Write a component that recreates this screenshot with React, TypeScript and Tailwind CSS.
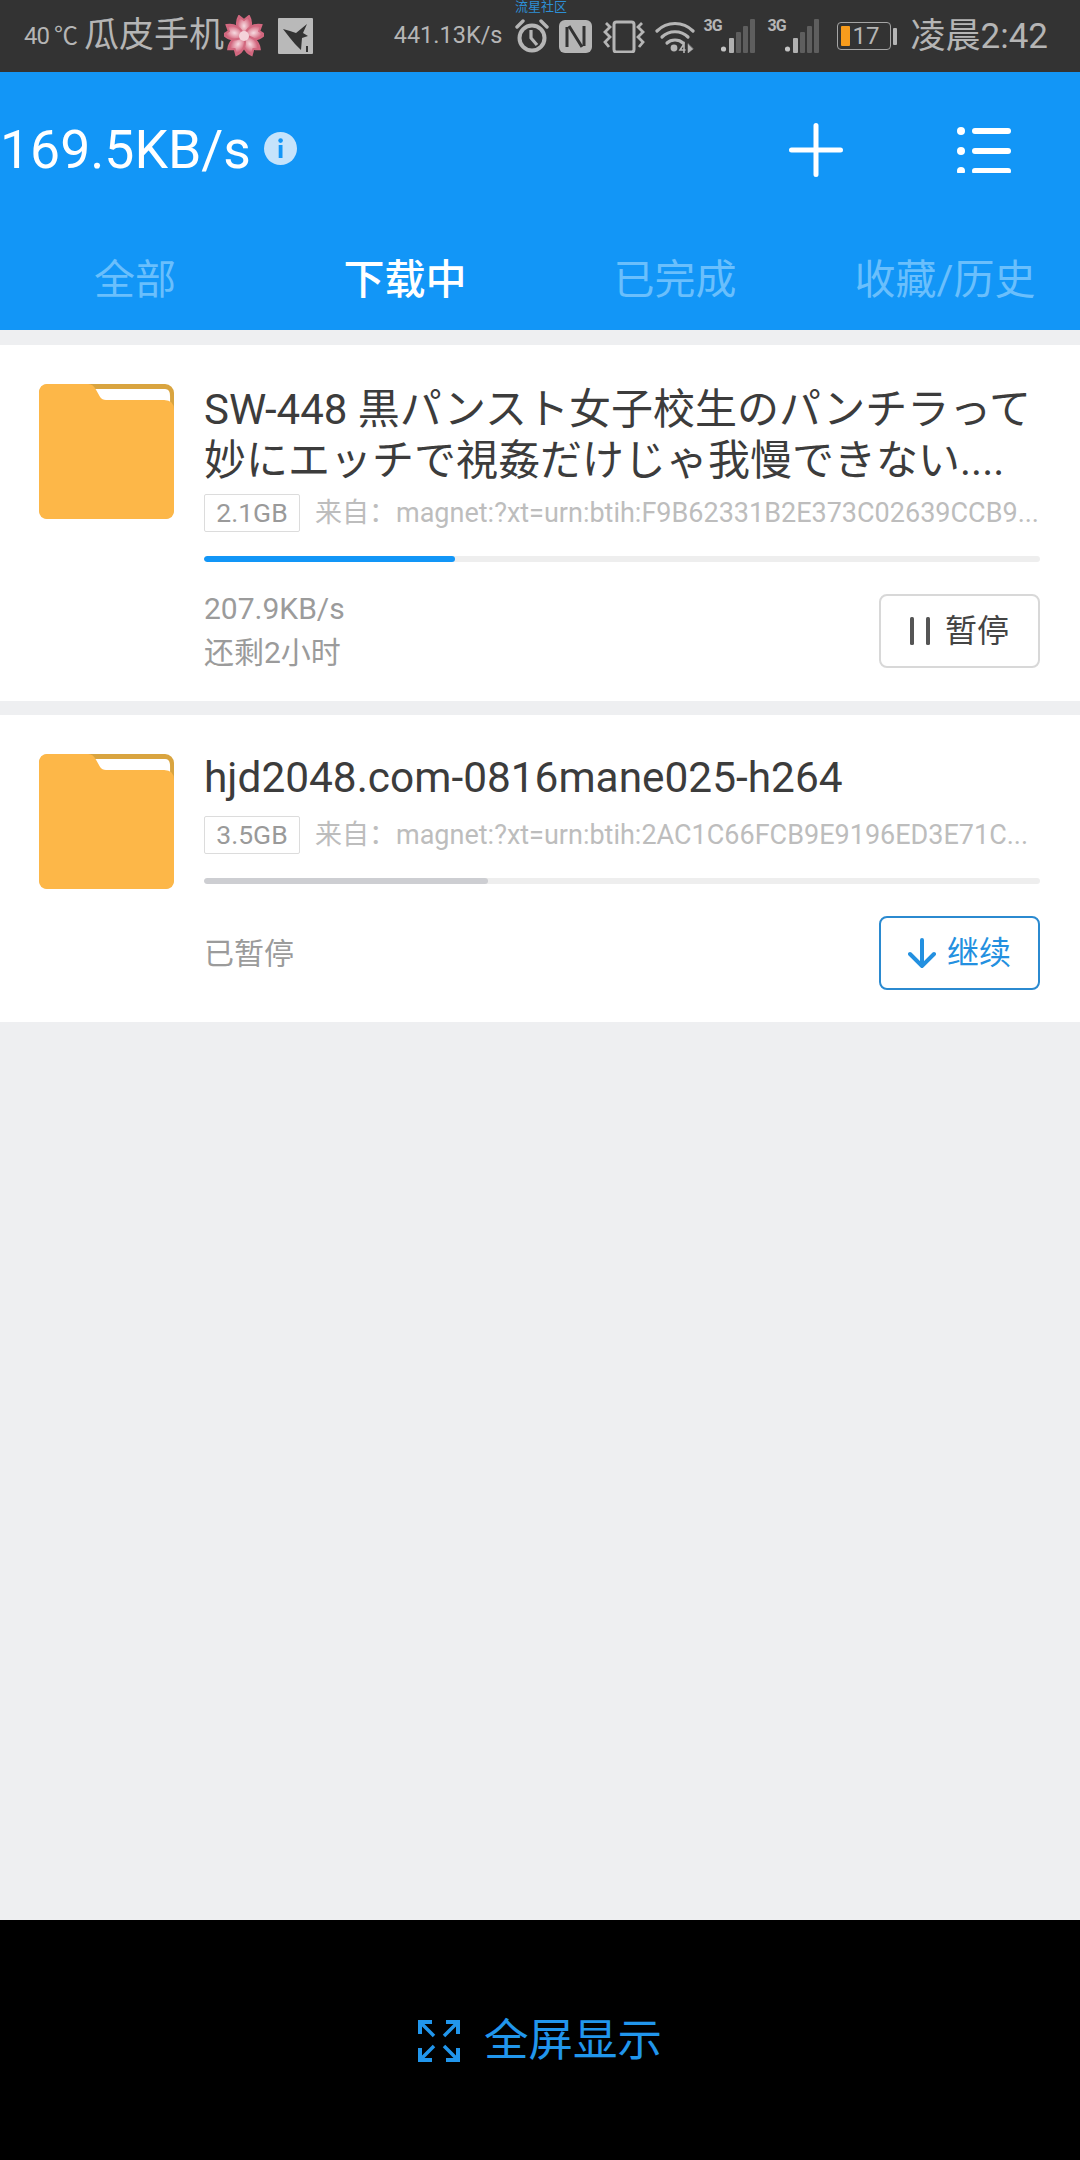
import React from "react";

function Flower() {
  return (
    <svg width="40" height="42" viewBox="-20 -21 40 42" className="shrink-0">
      <defs>
        <radialGradient id="petal" cx="50%" cy="50%" r="50%">
          <stop offset="0%" stopColor="#f6dbe1" />
          <stop offset="45%" stopColor="#e7a4b2" />
          <stop offset="100%" stopColor="#cf5f78" />
        </radialGradient>
      </defs>
      {[0, 72, 144, 216, 288].map((a) => (
        <path
          key={a}
          d="M0 0 C-7 -5 -9 -13 -5 -20 L0 -16 L5 -20 C9 -13 7 -5 0 0 Z"
          fill="url(#petal)"
          stroke="#d2687f"
          strokeWidth="2"
          transform={`rotate(${a})`}
        />
      ))}
      <circle r="5" fill="#f4d3da" />
    </svg>
  );
}

function BirdBox() {
  return (
    <svg width="35" height="36" viewBox="0 0 35 36" className="shrink-0">
      <rect width="35" height="36" rx="1" fill="#b9b9b9" />
      <path d="M5 11 L12 13 L18 15 L29 6 L25 15 L30 18 L24 20 L23 32 L17 26 L12 20 Z" fill="#333333" />
      <rect x="28" y="28" width="2" height="6" fill="#333333" />
    </svg>
  );
}

function Alarm() {
  return (
    <svg width="34" height="34" viewBox="0 0 34 34" fill="none" stroke="#b5b5b5" className="shrink-0">
      <circle cx="17" cy="19" r="12.5" strokeWidth="4" />
      <path d="M16 11 V19 L22 26" strokeWidth="3.2" />
      <path d="M2 8 L8 2 M32 8 L26 2" strokeWidth="3.4" strokeLinecap="round" />
    </svg>
  );
}

function Nfc() {
  return (
    <svg width="33" height="33" viewBox="0 0 33 33" className="shrink-0">
      <rect width="33" height="33" rx="6" fill="#b5b5b5" />
      <path d="M8 7 V27 M25 6 V26 M10 6 L23 27" stroke="#333333" strokeWidth="3" fill="none" />
    </svg>
  );
}

function Vibrate() {
  return (
    <svg width="42" height="33" viewBox="0 0 42 33" fill="none" stroke="#b5b5b5" className="shrink-0">
      <rect x="11" y="2" width="20" height="30" rx="2.5" strokeWidth="3" />
      <path d="M3 3 L7 7 L2 12 L7 17 L2 22 L6 27" strokeWidth="2.8" />
      <path d="M39 3 L35 7 L40 12 L35 17 L40 22 L36 27" strokeWidth="2.8" />
    </svg>
  );
}

function Wifi() {
  return (
    <svg width="40" height="33" viewBox="0 0 40 33" fill="none" stroke="#b5b5b5" strokeLinecap="round" className="shrink-0">
      <path d="M2 11 C12 1 28 1 38 11" strokeWidth="3.2" />
      <path d="M7 17 C14 10 26 10 33 17" strokeWidth="3.2" />
      <path d="M12 23 C16 19 24 19 28 23" strokeWidth="3.2" />
      <circle cx="19" cy="28" r="3.4" fill="#b5b5b5" stroke="none" />
      <path d="M29 33 V24 L25 30 H30" strokeWidth="1.6" />
      <path d="M33 24 V33 L38 29 Z" fill="#b5b5b5" strokeWidth="0.5" />
    </svg>
  );
}

function Signal() {
  return (
    <div className="relative flex h-[34px] w-[53px] shrink-0 items-start">
      <span className="text-[16px] font-bold leading-[14px] tracking-[-1px] text-[#b5b5b5]">3G</span>
      <svg width="36" height="34" viewBox="0 0 36 34" className="absolute right-0 top-0">
        <circle cx="2.5" cy="30" r="2.6" fill="#c4c4c4" />
        <rect x="8" y="19" width="5" height="15" rx="1" fill="#b0b0b0" />
        <rect x="15" y="13" width="5" height="21" rx="1" fill="#5e5e5e" />
        <rect x="22" y="7" width="5" height="27" rx="1" fill="#5e5e5e" />
        <rect x="29" y="0" width="5" height="34" rx="1" fill="#5e5e5e" />
      </svg>
    </div>
  );
}

function Battery() {
  return (
    <div className="flex shrink-0 items-center gap-[2px]">
      <div className="flex h-[28px] w-[54px] items-center rounded-[4px] border border-[#a5a5a5] pl-[3px]">
        <div className="h-[20px] w-[9px] rounded-[1px] bg-[#f89c1c]" />
        <span className="ml-[3px] text-[24px] leading-none text-[#b5b5b5]">17</span>
      </div>
      <div className="h-[17px] w-[4px] rounded-[1px] bg-[#b5b5b5]" />
    </div>
  );
}

function StatusBar() {
  return (
    <div className="relative flex h-[72px] shrink-0 items-center justify-between bg-[#333333] pl-[24px] pr-[32px] text-[#b5b5b5]">
      <div className="flex items-center">
        <span className="w-[60px] text-[24px] tracking-[-1px]">40 ℃</span>
        <span className="text-[35px]">瓜皮手机</span>
        <Flower />
        <div className="ml-[14px]">
          <BirdBox />
        </div>
      </div>
      <div className="flex items-center">
        <span className="mr-[12px] text-[23.5px]">441.13K/s</span>
        <div className="mr-[10px]"><Alarm /></div>
        <div className="mr-[11px]"><Nfc /></div>
        <div className="mr-[10px]"><Vibrate /></div>
        <div className="mr-[9px]"><Wifi /></div>
        <div className="mr-[11px]"><Signal /></div>
        <div className="mr-[16px]"><Signal /></div>
        <div className="mr-[14px]"><Battery /></div>
        <span className="text-[35px] leading-none">凌晨2:42</span>
      </div>
      <span className="absolute left-[515px] top-0 text-[13px] leading-[14px] text-[#2d8fd5]">流星社区</span>
    </div>
  );
}

function Header() {
  const tabs = ["全部", "下载中", "已完成", "收藏/历史"];
  return (
    <div className="shrink-0 bg-[#1296f7]">
      <div className="flex h-[160px] items-center justify-between pb-[4px]">
        <div className="flex items-center">
          <span className="text-[53.5px] leading-none text-white">169.5KB/s</span>
          <svg width="33" height="33" viewBox="0 0 33 33" className="ml-[13px] -mt-[4px]">
            <circle cx="16.5" cy="16.5" r="16.5" fill="#c5e3fb" />
            <rect x="14.7" y="13" width="3.8" height="13" fill="#1296f7" />
            <circle cx="16.6" cy="8.6" r="2.3" fill="#1296f7" />
          </svg>
        </div>
        <div className="flex items-center pr-[69px]">
          <svg width="54" height="54" viewBox="0 0 54 54" stroke="#ffffff" strokeWidth="5" strokeLinecap="round" className="mr-[114px]">
            <path d="M27 2.5 V51.5 M2.5 27 H51.5" />
          </svg>
          <svg width="54" height="46" viewBox="0 0 54 46" fill="#ffffff">
            <circle cx="4" cy="4" r="4" />
            <circle cx="4" cy="24" r="4" />
            <circle cx="4" cy="44" r="4" />
            <rect x="15" y="1" width="39" height="6" rx="3" />
            <rect x="15" y="21" width="39" height="6" rx="3" />
            <rect x="15" y="41" width="39" height="6" rx="3" />
          </svg>
        </div>
      </div>
      <div className="grid h-[98px] grid-cols-4 pt-[23px]">
        {tabs.map((t, i) => (
          <div
            key={t}
            className={i === 1 ? "text-center text-[41px] font-medium leading-[50px] text-white" : "text-center text-[41px] leading-[50px] text-[#6abffc]"}
          >
            {t}
          </div>
        ))}
      </div>
    </div>
  );
}

function Folder() {
  return (
    <svg width="135" height="135" viewBox="0 0 137 135" preserveAspectRatio="none" className="shrink-0">
      <rect width="137" height="135" rx="9" fill="#d9a43f" />
      <path d="M56 5 H128 Q133 5 133 12 V20 H62 Z" fill="#ffffff" />
      <path d="M9 0 H50 Q55 0 58 6 L62 13 Q64 16 68 16 H127 Q137 16 137 26 V126 Q137 135 128 135 H9 Q0 135 0 126 V9 Q0 0 9 0 Z" fill="#fdb748" />
    </svg>
  );
}

function Tag({ size, source }: { size: string; source: string }) {
  return (
    <div className="flex items-center">
      <div className="flex h-[38px] w-[96px] shrink-0 items-center justify-center rounded-[2px] border border-[#dcdcdc] text-[26.5px] text-[#9a9a9a]">
        {size}
      </div>
      <div className="ml-[15px] whitespace-nowrap text-[27px] leading-[38px] text-[#bdbdbd]">
        来自：{source}
      </div>
    </div>
  );
}

function Progress({ pct, fill }: { pct: number; fill: string }) {
  return (
    <div className="mt-[24px] h-[6px] w-[836px] overflow-hidden rounded-full bg-[#eeeeee]">
      <div className={`h-full rounded-full ${fill}`} style={{ width: `${pct}%` }} />
    </div>
  );
}

function Page() {
  return (
    <div className="flex flex-1 flex-col gap-[14px] bg-[#eeeff1] pt-[15px]">
      <div className="flex h-[356px] bg-white pl-[39px] pt-[39px]">
        <Folder />
        <div className="ml-[30px] flex-1">
          <div className="w-[836px] text-[42px] leading-[51px] text-[#3c3c3c]">
            <div className="whitespace-nowrap">SW-448 黒パンスト女子校生のパンチラって</div>
            <div className="whitespace-nowrap">妙にエッチで視姦だけじゃ我慢できない....</div>
          </div>
          <div className="mt-[8px]">
            <Tag size="2.1GB" source="magnet:?xt=urn:btih:F9B62331B2E373C02639CCB9..." />
          </div>
          <Progress pct={30} fill="bg-[#1296f7]" />
          <div className="mt-[25px] flex w-[836px] items-center justify-between">
            <div className="text-[30px] leading-[44px] text-[#9b9b9b]">
              <div>207.9KB/s</div>
              <div>还剩2小时</div>
            </div>
            <button className="flex h-[74px] w-[161px] items-center justify-center rounded-[8px] border-2 border-[#d8d8d8] text-[32px] text-[#444444]">
              <svg width="20" height="28" viewBox="0 0 20 28" className="mr-[15px]" fill="#555555">
                <rect x="0" y="0" width="4" height="28" rx="1.5" />
                <rect x="16" y="0" width="4" height="28" rx="1.5" />
              </svg>
              暂停
            </button>
          </div>
        </div>
      </div>
      <div className="flex h-[307px] bg-white pl-[39px] pt-[39px]">
        <Folder />
        <div className="ml-[30px] flex-1">
          <div className="-mt-[2px] text-[42.4px] leading-[51px] text-[#3c3c3c]">hjd2048.com-0816mane025-h264</div>
          <div className="mt-[13px]">
            <Tag size="3.5GB" source="magnet:?xt=urn:btih:2AC1C66FCB9E9196ED3E71C..." />
          </div>
          <Progress pct={34} fill="bg-[#cdced2]" />
          <div className="mt-[32px] flex w-[836px] items-center justify-between">
            <div className="text-[30px] text-[#9b9b9b]">已暂停</div>
            <button className="flex h-[74px] w-[161px] items-center justify-center rounded-[8px] border-2 border-[#2b8ad0] text-[32px] text-[#2390e0]">
              <svg width="28" height="30" viewBox="0 0 28 30" className="mr-[11px]" fill="none" stroke="#2390e0" strokeWidth="4" strokeLinecap="round">
                <path d="M14 2 V27 M2 16 L14 28 L26 16" />
              </svg>
              继续
            </button>
          </div>
        </div>
      </div>
    </div>
  );
}

function BottomBar() {
  return (
    <div className="flex h-[240px] shrink-0 items-center justify-center bg-black pt-[2px] text-[44.5px] text-[#2196ec]">
      <svg width="42" height="42" viewBox="0 0 42 42" fill="none" stroke="#2196ec" strokeWidth="3.5" className="mr-[24px]">
        <path d="M2 14 V2 H14 M28 2 H40 V14 M40 28 V40 H28 M14 40 H2 V28" strokeWidth="4" />
        <path d="M4 4 L16 16 M38 4 L26 16 M38 38 L26 26 M4 38 L16 26" />
      </svg>
      全屏显示
    </div>
  );
}

export default function App() {
  return (
    <div className="flex h-[2160px] w-[1080px] flex-col overflow-hidden font-['Roboto','Noto_Sans_CJK_SC',sans-serif]">
      <StatusBar />
      <Header />
      <Page />
      <BottomBar />
    </div>
  );
}
